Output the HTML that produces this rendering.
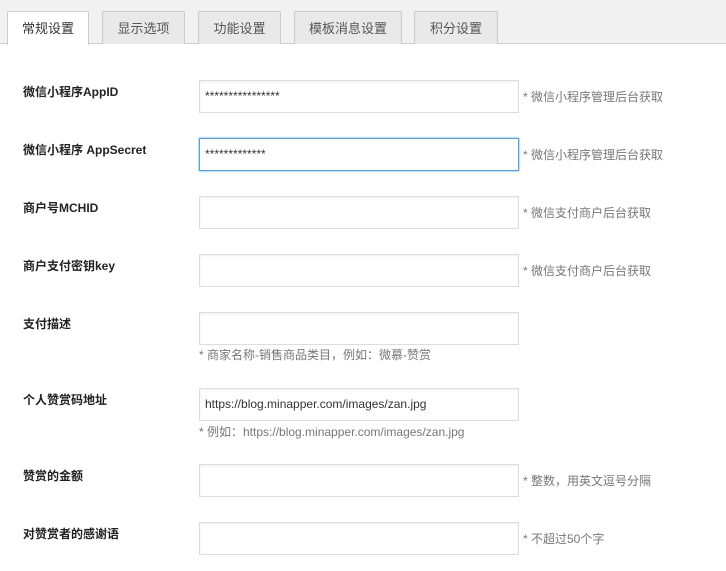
<!DOCTYPE html><html><head><meta charset="utf-8"><style>
body{margin:0;width:726px;height:571px;overflow:hidden;background:#fff;font-family:"Liberation Sans","Noto Sans CJK SC",sans-serif;font-size:13px;color:#333;position:relative}
.top{position:absolute;left:0;top:0;width:726px;height:44px;background:#f1f1f1;border-bottom:1px solid #ccc;box-sizing:border-box}
.tab{position:absolute;top:11px;height:33px;box-sizing:border-box;border:1px solid #ccc;border-bottom:none;background:#e9e9e9;color:#555;text-align:center;line-height:33px;font-size:13px;border-radius:2px 2px 0 0}
.tab.a{background:#fff;color:#333;height:34px}
.lab{position:absolute;left:23px;font-weight:bold;font-size:12px;color:#222}
.inp{position:absolute;left:199px;width:320px;height:33px;box-sizing:border-box;border:1px solid #ddd;box-shadow:inset 0 1px 2px rgba(0,0,0,.07);font-size:12px;line-height:31px;padding-left:5px;color:#333}
.inp.f{border-color:#5b9dd9;box-shadow:0 0 2px rgba(30,140,190,.8)}
.h{position:absolute;left:523px;color:#777;font-size:12px}
.u{position:absolute;left:199px;color:#777;font-size:12px}
</style></head><body>
<div class="top"></div>
<div class="tab a" style="left:7px;width:82px">常规设置</div>
<div class="tab" style="left:102px;width:83px">显示选项</div>
<div class="tab" style="left:198px;width:83px">功能设置</div>
<div class="tab" style="left:294px;width:108px">模板消息设置</div>
<div class="tab" style="left:414px;width:84px">积分设置</div>

<div class="lab" style="top:83px">微信小程序AppID</div>
<div class="inp" style="top:80px">****************</div>
<div class="h" style="top:88px">* 微信小程序管理后台获取</div>

<div class="lab" style="top:141px">微信小程序 AppSecret</div>
<div class="inp f" style="top:138px">*************</div>
<div class="h" style="top:146px">* 微信小程序管理后台获取</div>

<div class="lab" style="top:199px">商户号MCHID</div>
<div class="inp" style="top:196px"></div>
<div class="h" style="top:204px">* 微信支付商户后台获取</div>

<div class="lab" style="top:257px">商户支付密钥key</div>
<div class="inp" style="top:254px"></div>
<div class="h" style="top:262px">* 微信支付商户后台获取</div>

<div class="lab" style="top:315px">支付描述</div>
<div class="inp" style="top:312px"></div>
<div class="u" style="top:346px">* 商家名称-销售商品类目，例如：微慕-赞赏</div>

<div class="lab" style="top:391px">个人赞赏码地址</div>
<div class="inp" style="top:388px">https://blog.minapper.com/images/zan.jpg</div>
<div class="u" style="top:423px">* 例如：https://blog.minapper.com/images/zan.jpg</div>

<div class="lab" style="top:467px">赞赏的金额</div>
<div class="inp" style="top:464px"></div>
<div class="h" style="top:472px">* 整数，用英文逗号分隔</div>

<div class="lab" style="top:525px">对赞赏者的感谢语</div>
<div class="inp" style="top:522px"></div>
<div class="h" style="top:530px">* 不超过50个字</div>
</body></html>
